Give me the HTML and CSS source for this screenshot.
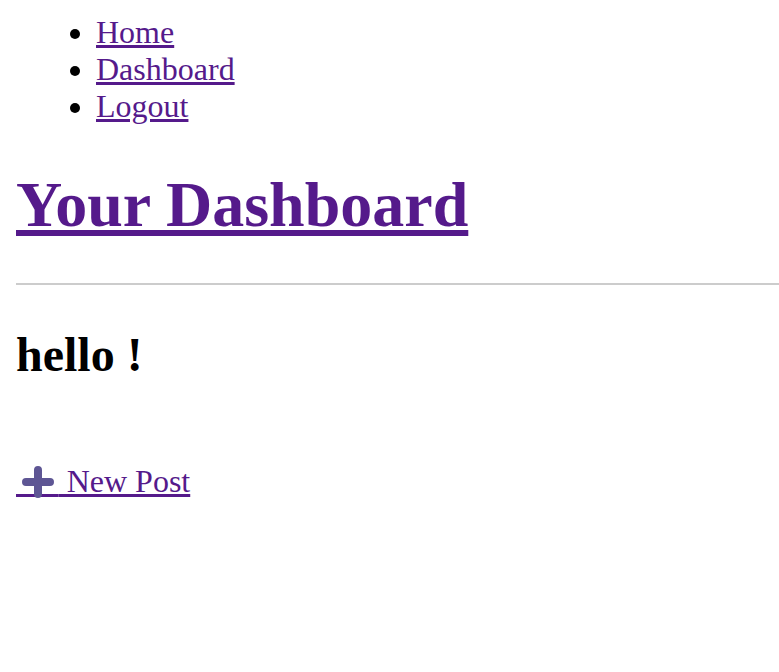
FILE: index.html
```html
<!DOCTYPE html>
<html>
<head>
<meta charset="utf-8">
<title>Your Dashboard</title>
<link rel="stylesheet" href="styles.css">
</head>
<body class="page">
<ul class="nav">
  <li><a href="#">Home</a></li>
  <li><a href="#">Dashboard</a></li>
  <li><a href="#">Logout</a></li>
</ul>
<h1 class="title"><a href="#">Your Dashboard</a></h1>
<hr class="rule">
<h2 class="greeting">hello !</h2>
<p class="actions"><a class="new-post" href="#"><span class="icon-slot">&#8195;&#8196;<svg class="plus" width="43" height="32" viewBox="0 0 43 32"><path d="M22 4 V28 M10 16 H34" stroke="#5e5694" stroke-width="8" stroke-linecap="round" fill="none"/></svg></span> New Post</a></p>
</body>
</html>
```
FILE: styles.css
```css
html { background: #fff; }
.page {
  margin: 0;
  padding: 0 0 0 16px;
  font-family: "Liberation Serif", "Times New Roman", serif;
  font-size: 32px;
  color: #000;
}
a { color: #551a8b; }
.nav {
  margin: 14px 0 0;
  padding-left: 80px;
}
.title {
  font-size: 64px;
  font-weight: bold;
  margin: 43px 0 41px;
}
.rule {
  margin: 0;
  border: 0;
  border-top: 2px solid #cccccc;
  height: 0;
}
.greeting {
  font-size: 48px;
  font-weight: bold;
  margin: 42px 0 0;
}
.actions {
  margin: 81px 0 0;
}
.new-post { text-decoration: underline; }
.icon-slot {
  position: relative;
}
.plus {
  position: absolute;
  left: 0;
  top: 3px;
}
```
